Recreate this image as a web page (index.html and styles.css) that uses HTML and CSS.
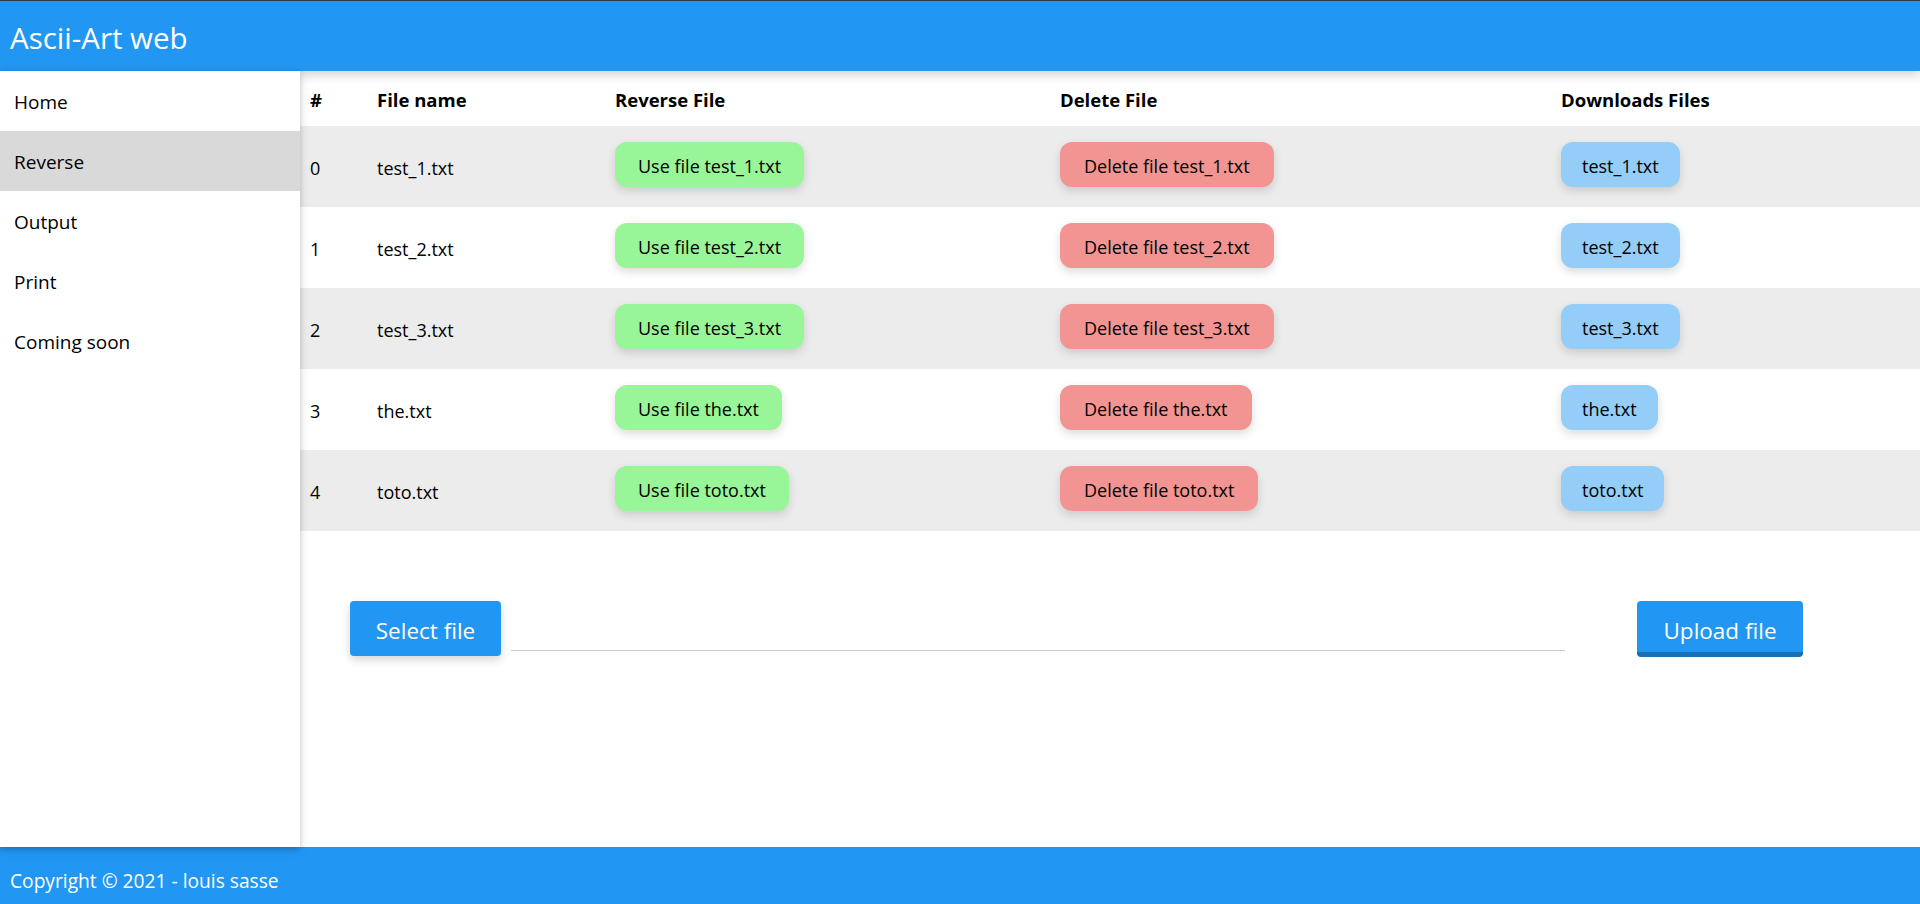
FILE: index.html
```html
<!DOCTYPE html>
<html lang="en">
<head>
<meta charset="utf-8">
<title>Ascii-Art web</title>
<link rel="stylesheet" href="styles.css">
</head>
<body>
<header class="topbar"><span class="brand">Ascii-Art web</span></header>
<div class="main">
  <nav class="sidebar">
    <a class="nav-item">Home</a>
    <a class="nav-item active">Reverse</a>
    <a class="nav-item">Output</a>
    <a class="nav-item">Print</a>
    <a class="nav-item">Coming soon</a>
  </nav>
  <section class="content">
    <table class="files">
      <colgroup>
        <col class="c-num"><col class="c-name"><col class="c-rev"><col class="c-del"><col class="c-dl">
      </colgroup>
      <thead>
        <tr><th>#</th><th>File name</th><th>Reverse File</th><th>Delete File</th><th>Downloads Files</th></tr>
      </thead>
      <tbody>
        <tr><td class="txt">0</td><td class="txt">test_1.txt</td><td><span class="pill pill-green">Use file test_1.txt</span></td><td><span class="pill pill-red">Delete file test_1.txt</span></td><td><span class="pill pill-blue">test_1.txt</span></td></tr>
        <tr><td class="txt">1</td><td class="txt">test_2.txt</td><td><span class="pill pill-green">Use file test_2.txt</span></td><td><span class="pill pill-red">Delete file test_2.txt</span></td><td><span class="pill pill-blue">test_2.txt</span></td></tr>
        <tr><td class="txt">2</td><td class="txt">test_3.txt</td><td><span class="pill pill-green">Use file test_3.txt</span></td><td><span class="pill pill-red">Delete file test_3.txt</span></td><td><span class="pill pill-blue">test_3.txt</span></td></tr>
        <tr><td class="txt">3</td><td class="txt">the.txt</td><td><span class="pill pill-green">Use file the.txt</span></td><td><span class="pill pill-red">Delete file the.txt</span></td><td><span class="pill pill-blue">the.txt</span></td></tr>
        <tr><td class="txt">4</td><td class="txt">toto.txt</td><td><span class="pill pill-green">Use file toto.txt</span></td><td><span class="pill pill-red">Delete file toto.txt</span></td><td><span class="pill pill-blue">toto.txt</span></td></tr>
      </tbody>
    </table>
    <div class="upload">
      <button class="btn btn-select" type="button">Select file</button>
      <input class="file-input" type="text" aria-label="file">
      <button class="btn btn-upload" type="button">Upload file</button>
    </div>
  </section>
</div>
<footer class="footer">Copyright © 2021 - louis sasse</footer>
</body>
</html>
```
FILE: styles.css
```css
html, body {
  margin: 0;
  padding: 0;
}

body {
  height: 904px;
  overflow: hidden;
  display: flex;
  flex-direction: column;
  background: #fff;
  color: #000;
  font-family: "Open Sans", "Segoe UI", sans-serif;
}

.topbar {
  flex: none;
  height: 71px;
  box-sizing: border-box;
  border-top: 1px solid #323a45;
  padding: 17px 0 0 10px;
  background: #2196f3;
  color: #fff;
  box-shadow: 0 4px 10px 0 rgba(0, 0, 0, 0.18);
  position: relative;
  z-index: 2;
}

.brand {
  display: block;
  font-size: 29.5px;
  line-height: 40px;
}

.main {
  flex: 1;
  display: flex;
  min-height: 0;
}

.sidebar {
  flex: none;
  width: 300px;
  background: #fff;
  box-shadow: 0 2px 5px 0 rgba(0, 0, 0, 0.16), 0 2px 10px 0 rgba(0, 0, 0, 0.12);
  position: relative;
  z-index: 3;
}

.nav-item {
  display: flex;
  align-items: center;
  box-sizing: border-box;
  height: 60px;
  padding: 2px 14px 0;
  font-size: 19px;
  color: #000;
  text-decoration: none;
}

.nav-item.active {
  background: #d9d9d9;
}

.content {
  flex: 1;
  min-width: 0;
  background: #fff;
}

.files {
  width: 100%;
  border-collapse: collapse;
  table-layout: fixed;
}

.c-num { width: 67px; }
.c-name { width: 238px; }
.c-rev { width: 445px; }
.c-del { width: 501px; }
.c-dl { width: 369px; }

.files th {
  text-align: left;
  font-weight: 700;
  font-size: 18.5px;
  line-height: 24px;
  padding: 17px 10px 14px;
}

.files td {
  height: 45px;
  box-sizing: content-box;
  font-size: 18px;
  line-height: 45px;
  padding: 16px 10px 20px;
  vertical-align: top;
  white-space: nowrap;
}

.files td.txt {
  padding-top: 20px;
  padding-bottom: 16px;
}

.files tbody tr:nth-child(odd) {
  background: #ececec;
}

.pill {
  display: inline-block;
  vertical-align: top;
  box-sizing: border-box;
  height: 45px;
  line-height: 42px;
  padding: 3px 21px 0;
  border-radius: 12px;
  box-shadow: 0 4px 10px 0 rgba(0, 0, 0, 0.14);
  color: #000;
}

.pill-green { background: #98f598; padding-left: 23px; padding-right: 23px; }
.pill-red { background: #f29492; padding-left: 24px; padding-right: 24px; }
.pill-blue { background: #94cdf8; }

.upload {
  display: flex;
  align-items: flex-start;
  margin-top: 70px;
  padding-left: 50px;
}

.btn {
  flex: none;
  box-sizing: border-box;
  height: 55px;
  padding: 15px 0 10px;
  border: none;
  border-radius: 4px;
  background: #2196f3;
  color: #fff;
  font-family: inherit;
  font-size: 22.5px;
  line-height: 30px;
  text-align: center;
}

.btn-select {
  width: 151px;
  box-shadow: 0 4px 10px 0 rgba(0, 0, 0, 0.16);
}

.file-input {
  flex: none;
  width: 1054px;
  height: 50px;
  box-sizing: border-box;
  margin: 0 72px 0 10px;
  padding: 8px;
  border: none;
  border-bottom: 1px solid #ccc;
  font: inherit;
  outline: none;
}

.btn-upload {
  width: 166px;
  height: 56px;
  padding-bottom: 6px;
  border-bottom: 5px solid #1b6fb3;
}

.footer {
  flex: none;
  height: 57px;
  box-sizing: border-box;
  padding: 21px 0 0 10px;
  background: #2196f3;
  color: #fff;
  font-size: 19.2px;
  line-height: 25px;
  position: relative;
  z-index: 1;
}
```
